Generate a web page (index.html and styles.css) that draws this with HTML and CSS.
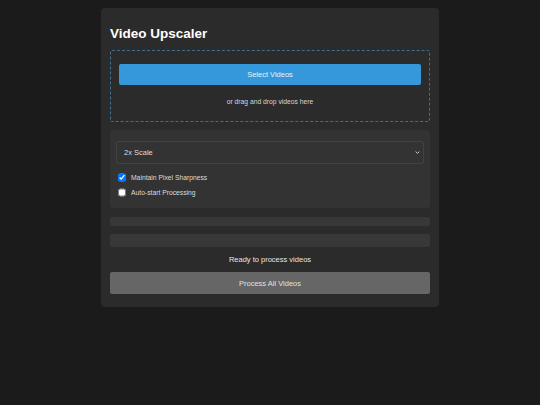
FILE: index.html
```html
<!DOCTYPE html>
<html>
<head>
<meta charset="utf-8">
<link rel="stylesheet" href="styles.css">
</head>
<body>
<div class="app">
  <h1 class="title">Video Upscaler</h1>
  <div class="dropzone">
    <button class="btn-select">Select Videos</button>
    <p class="drop-hint">or drag and drop videos here</p>
  </div>
  <div class="options">
    <div class="select-wrap">
      <select class="scale">
        <option>2x Scale</option>
        <option>3x Scale</option>
        <option>4x Scale</option>
      </select>
      <svg class="chev" width="5" height="3" viewBox="0 0 5 3"><path d="M0.6 0.5 L2.5 2.3 L4.4 0.5" fill="none" stroke="#dddddd" stroke-width="0.9"/></svg>
    </div>
    <label class="opt"><input type="checkbox" checked> <span>Maintain Pixel Sharpness</span></label>
    <label class="opt"><input type="checkbox"> <span>Auto-start Processing</span></label>
  </div>
  <div class="progress"></div>
  <div class="filelist"></div>
  <p class="status">Ready to process videos</p>
  <button class="btn-process">Process All Videos</button>
</div>
</body>
</html>
```

FILE: styles.css
```css
html, body {
  margin: 0;
  padding: 0;
  background: #1b1b1b;
  font-family: "Liberation Sans", Arial, sans-serif;
}
.app {
  box-sizing: border-box;
  width: 338px;
  margin: 8px auto 0;
  padding: 9px 9px 13px;
  background: #2b2b2b;
  border-radius: 4px;
}
.title {
  margin: 8.5px 0 8.5px;
  font-size: 13.5px;
  line-height: 16px;
  font-weight: bold;
  color: #ffffff;
}
.dropzone {
  box-sizing: border-box;
  height: 72px;
  border: 1px dashed #3f6f90;
  border-radius: 2px;
  padding: 13px 8px 0;
  text-align: center;
}
.btn-select {
  display: block;
  width: 100%;
  height: 21px;
  border: none;
  border-radius: 2px;
  background: #3498db;
  color: #e8f2fa;
  font-family: inherit;
  font-size: 7.5px;
  padding: 0;
}
.drop-hint {
  margin: 12px 0 0;
  font-size: 6.75px;
  line-height: 9px;
  color: #d6d6d6;
}
.options {
  box-sizing: border-box;
  margin-top: 8px;
  height: 78px;
  background: #333333;
  border-radius: 3px;
  padding: 11px 6.5px 0 6px;
}
.select-wrap {
  position: relative;
  margin-bottom: 6.5px;
}
.scale {
  display: block;
  box-sizing: border-box;
  width: 100%;
  height: 22.5px;
  background: #333333;
  border: 1px solid #424242;
  border-radius: 2px;
  color: #dddddd;
  font-family: inherit;
  font-size: 7.5px;
  padding: 0 7px;
  appearance: none;
  -webkit-appearance: none;
}
.chev {
  position: absolute;
  right: 3.5px;
  top: 10px;
  pointer-events: none;
}
.opt {
  display: flex;
  align-items: center;
  height: 15px;
  font-size: 6.75px;
  color: #dcdcdc;
  padding-left: 1.5px;
}
.opt input {
  width: 8.5px;
  height: 8.5px;
  margin: 0 5px 0 0;
}
.progress {
  margin-top: 8.7px;
  height: 9px;
  background: #383838;
  border-radius: 2px;
}
.filelist {
  margin-top: 8.3px;
  height: 12.7px;
  background: #383838;
  border-radius: 2px;
}
.status {
  margin: 8px 0 0;
  text-align: center;
  font-size: 7.5px;
  line-height: 9px;
  color: #e6e6e6;
}
.btn-process {
  display: block;
  width: 100%;
  height: 22px;
  margin-top: 8.6px;
  border: none;
  border-radius: 2px;
  background: #666666;
  color: #e0e0e0;
  font-family: inherit;
  font-size: 7.5px;
  padding: 0;
}
```
